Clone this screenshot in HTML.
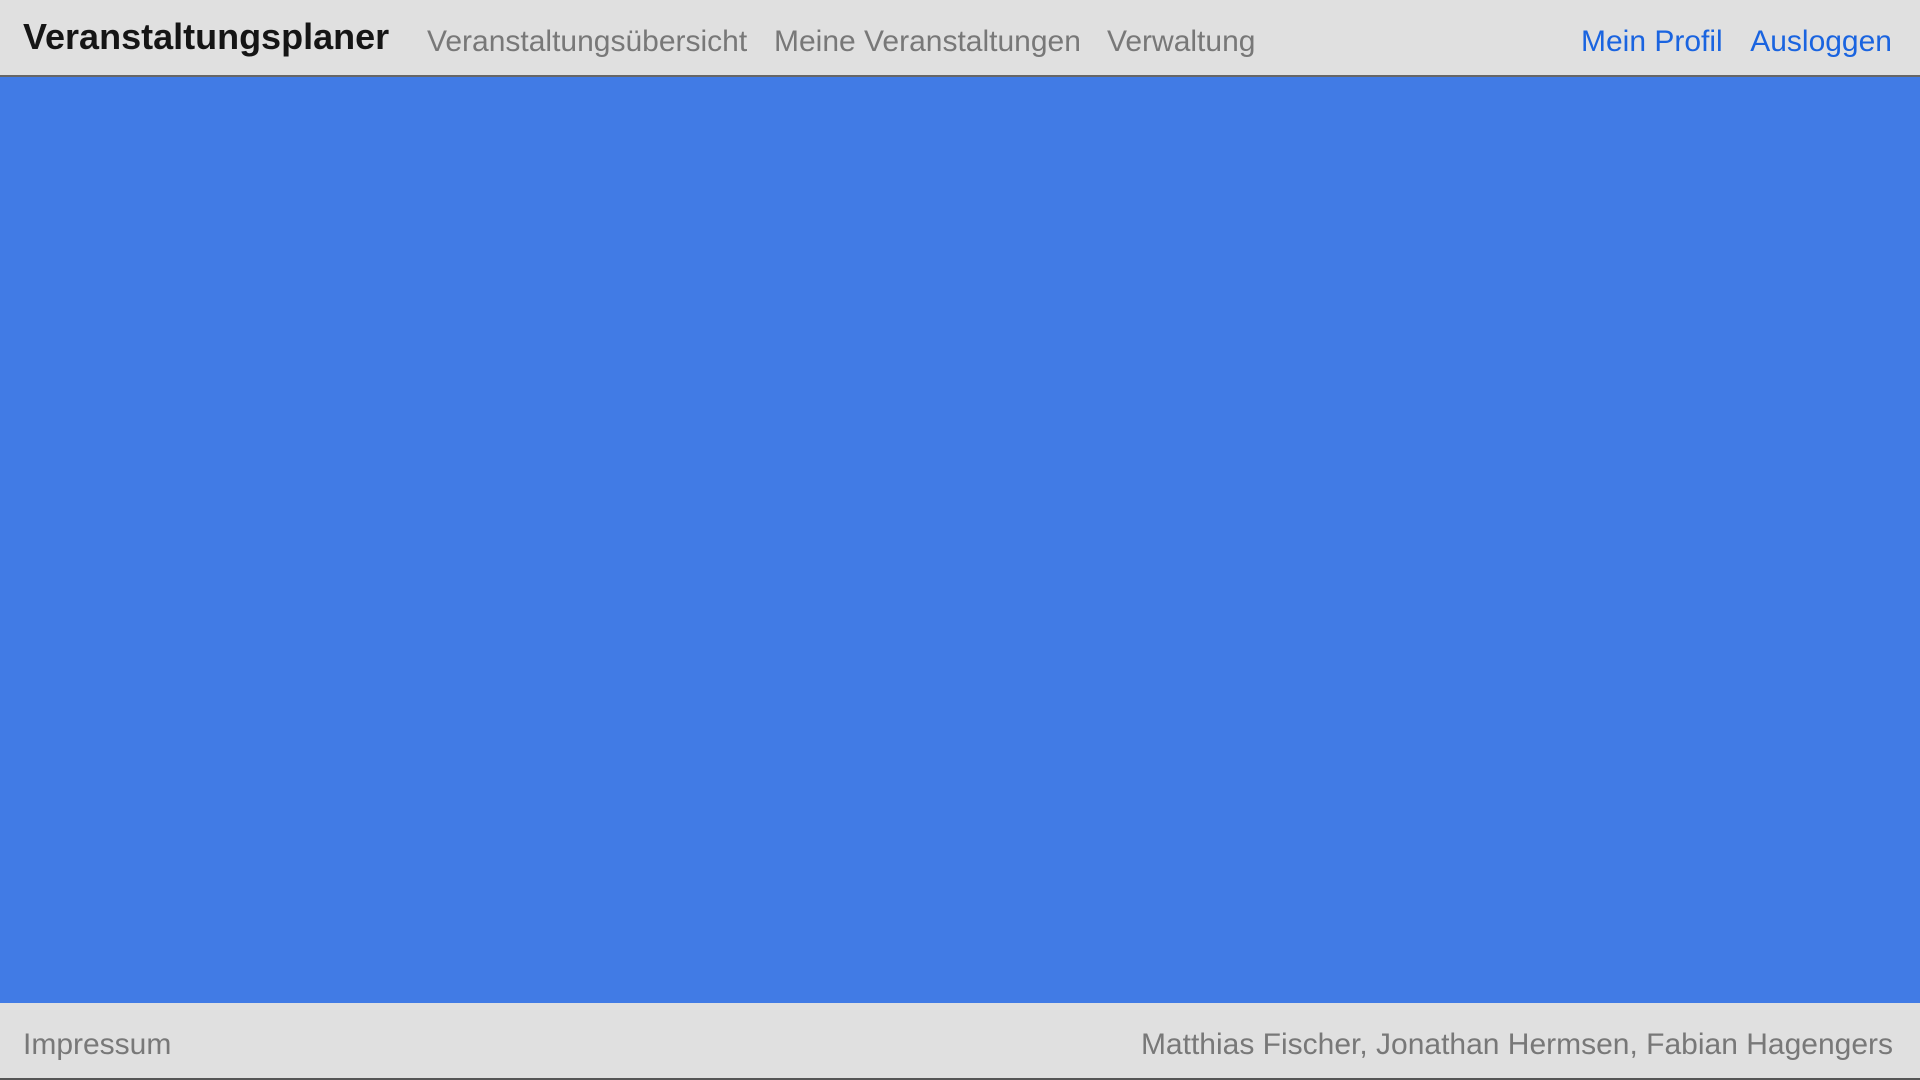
<!DOCTYPE html>
<html><head><meta charset="utf-8"><style>
html,body{margin:0;padding:0;width:1920px;height:1080px;overflow:hidden;font-family:"Liberation Sans",Arial,sans-serif;background:#417be5}
.hd{position:absolute;left:0;top:0;width:1920px;height:75px;background:#e0e0e0;border-bottom:2px solid #666}
.hd span,.ft span{position:absolute;white-space:nowrap;line-height:1}
.t{left:23px;top:19px;font-size:36px;font-weight:bold;color:#151515}
.n{top:27px;font-size:30px;color:#787878}
.l{top:27px;font-size:30px;color:#1a64e0}
.ft{position:absolute;left:0;top:1003px;width:1920px;height:75px;background:#e0e0e0;border-bottom:2px solid #555}
.f{top:27px;font-size:30px;color:#787878}
</style></head><body>
<div class="hd">
<span class="t">Veranstaltungsplaner</span>
<span class="n" style="left:427px">Veranstaltungsübersicht</span>
<span class="n" style="left:774px">Meine Veranstaltungen</span>
<span class="n" style="left:1107px">Verwaltung</span>
<span class="l" style="left:1581px">Mein Profil</span>
<span class="l" style="right:28px">Ausloggen</span>
</div>
<div class="ft">
<span class="f" style="left:23px">Impressum</span>
<span class="f" style="right:27px">Matthias Fischer, Jonathan Hermsen, Fabian Hagengers</span>
</div>
</body></html>
